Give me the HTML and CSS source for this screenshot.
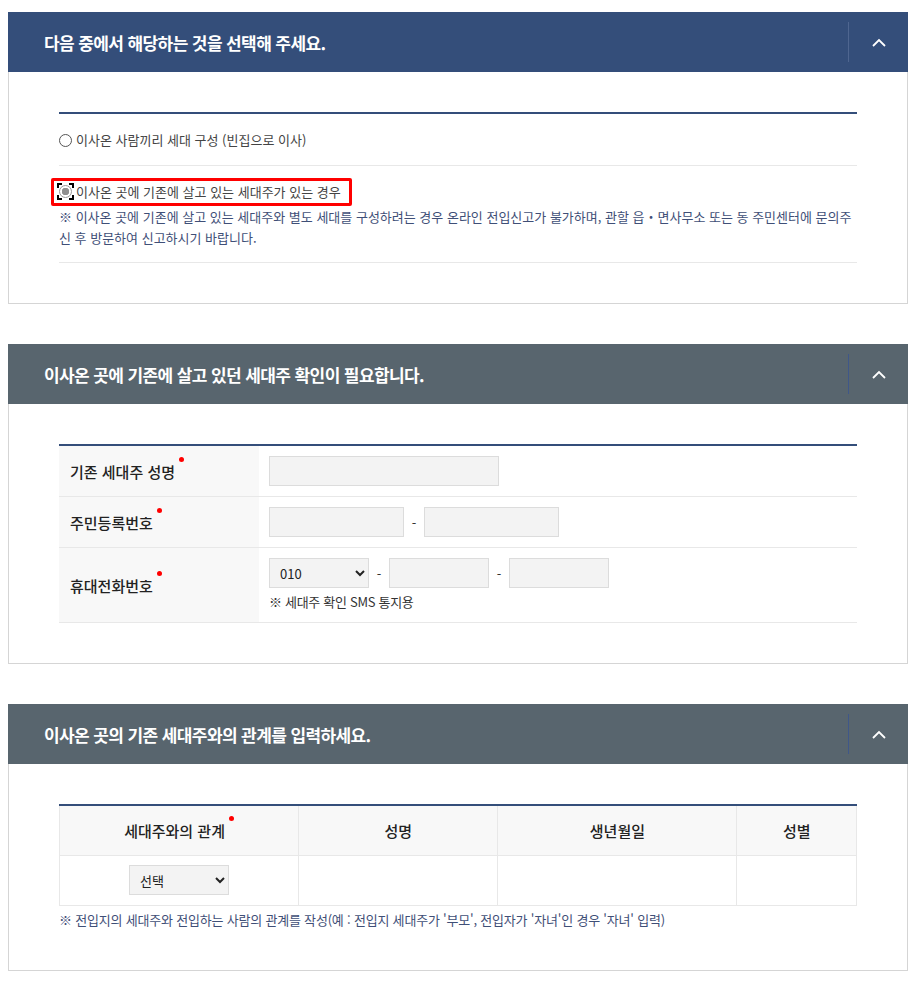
FILE: index.html
```html
<!DOCTYPE html>
<html lang="ko">
<head>
    <meta charset="UTF-8">
    <meta name="viewport" content="width=device-width, initial-scale=1.0">
    <title>전입신고 – 세대주 확인</title>
    <link rel="stylesheet" href="styles.css">
</head>
<body>
<div class="page">

    <!-- 1. 이사 유형 선택 -->
    <section class="panel">
        <div class="panel-head head-blue">
            <h2>다음 중에서 해당하는 것을 선택해 주세요.</h2>
            <button class="toggle" type="button" aria-label="접기">
                <svg width="14" height="9" viewBox="0 0 14 9"><path d="M1 8 7 2l6 6" fill="none" stroke="#fff" stroke-width="1.8"/></svg>
            </button>
        </div>
        <div class="panel-body">
            <ul class="choice-list">
                <li class="choice">
                    <label class="choice-label">
                        <span class="radio-wrap"><input class="radio" type="radio" name="moveType"></span>이사온 사람끼리 세대 구성 (빈집으로 이사)
                    </label>
                </li>
                <li class="choice">
                    <label class="choice-label is-focused">
                        <span class="radio-wrap focus-ring"><input class="radio" type="radio" name="moveType" checked></span>이사온 곳에 기존에 살고 있는 세대주가 있는 경우
                    </label>
                    <p class="note">※ 이사온 곳에 기존에 살고 있는 세대주와 별도 세대를 구성하려는 경우 온라인 전입신고가 불가하며, 관할 읍・면사무소 또는 동 주민센터에 문의주신 후 방문하여 신고하시기 바랍니다.</p>
                </li>
            </ul>
        </div>
    </section>

    <!-- 2. 기존 세대주 확인 -->
    <section class="panel">
        <div class="panel-head head-gray">
            <h2>이사온 곳에 기존에 살고 있던 세대주 확인이 필요합니다.</h2>
            <button class="toggle" type="button" aria-label="접기">
                <svg width="14" height="9" viewBox="0 0 14 9"><path d="M1 8 7 2l6 6" fill="none" stroke="#fff" stroke-width="1.8"/></svg>
            </button>
        </div>
        <div class="panel-body">
            <table class="form-table">
                <tr>
                    <th><span class="req">기존 세대주 성명</span></th>
                    <td><input class="inp w230" type="text"></td>
                </tr>
                <tr>
                    <th><span class="req">주민등록번호</span></th>
                    <td>
                        <div class="field-row">
                            <input class="inp w135" type="text">
                            <span class="dash">-</span>
                            <input class="inp w135" type="password">
                        </div>
                    </td>
                </tr>
                <tr>
                    <th><span class="req">휴대전화번호</span></th>
                    <td>
                        <div class="field-row">
                            <select class="sel w100">
                                <option>010</option>
                                <option>011</option>
                                <option>016</option>
                                <option>017</option>
                                <option>019</option>
                            </select>
                            <span class="dash">-</span>
                            <input class="inp w100" type="text">
                            <span class="dash">-</span>
                            <input class="inp w100" type="text">
                        </div>
                        <p class="sub-note">※ 세대주 확인 SMS 통지용</p>
                    </td>
                </tr>
            </table>
        </div>
    </section>

    <!-- 3. 세대주와의 관계 -->
    <section class="panel">
        <div class="panel-head head-gray">
            <h2>이사온 곳의 기존 세대주와의 관계를 입력하세요.</h2>
            <button class="toggle" type="button" aria-label="접기">
                <svg width="14" height="9" viewBox="0 0 14 9"><path d="M1 8 7 2l6 6" fill="none" stroke="#fff" stroke-width="1.8"/></svg>
            </button>
        </div>
        <div class="panel-body">
            <table class="list-table">
                <colgroup>
                    <col class="c30">
                    <col class="c25">
                    <col class="c30">
                    <col class="c15">
                </colgroup>
                <tr>
                    <th><span class="req">세대주와의 관계</span></th>
                    <th>성명</th>
                    <th>생년월일</th>
                    <th>성별</th>
                </tr>
                <tr>
                    <td>
                        <select class="sel w100">
                            <option>선택</option>
                            <option>부모</option>
                            <option>자녀</option>
                            <option>배우자</option>
                        </select>
                    </td>
                    <td></td>
                    <td></td>
                    <td></td>
                </tr>
            </table>
            <p class="note">※ 전입지의 세대주와 전입하는 사람의 관계를 작성(예 : 전입지 세대주가 '부모', 전입자가 '자녀'인 경우 '자녀' 입력)</p>
        </div>
    </section>

</div>
</body>
</html>
```

FILE: styles.css
```css
* {
    box-sizing: border-box;
}
body {
    margin: 0;
    background: #fff;
    font-family: "Noto Sans CJK KR", "Noto Sans", sans-serif;
    font-size: 13px;
    color: #333;
}
.page {
    width: 900px;
    margin-left: 8px;
    padding-top: 12px;
}

/* 패널 */
.panel {
    margin-bottom: 40px;
}
.panel-head {
    height: 60px;
    display: flex;
    align-items: center;
    padding-left: 36px;
}
.head-blue {
    background-color: #344e7a;
}
.head-gray {
    background-color: #58656e;
}
.panel-head h2 {
    flex: 1;
    margin: 0;
    color: #fff;
    font-size: 17px;
    font-weight: 700;
    letter-spacing: -0.6px;
}
.toggle {
    width: 60px;
    height: 40px;
    padding: 0;
    background: none;
    border: 0;
    border-left: 1px solid #4f6690;
    display: flex;
    justify-content: center;
    align-items: center;
    cursor: pointer;
}
.head-gray .toggle {
    border-left-color: #3f5789;
}
.panel-body {
    border: 1px solid #d5d5d5;
    border-top: 0;
    padding: 40px 50px;
}

/* 선택 목록 */
.choice-list {
    list-style: none;
    margin: 0;
    padding: 0;
    border-top: 2px solid #344e7a;
}
.choice {
    padding: 16px 0 14px;
    border-bottom: 1px solid #e8e8e8;
}
.choice-label {
    position: relative;
    display: inline-flex;
    align-items: center;
    line-height: 20px;
    color: #444;
    cursor: pointer;
}
/* 키보드 포커스 표시(빨간 박스) */
.is-focused::before {
    content: "";
    position: absolute;
    top: -4px;
    bottom: -4px;
    left: -8px;
    right: -11px;
    border: 3px solid #f00;
    border-radius: 2px;
}
.radio-wrap {
    display: inline-flex;
    width: 17px;
    height: 17px;
    margin-left: -2px;
    margin-right: 2px;
    justify-content: center;
    align-items: center;
}
.focus-ring {
    background:
        linear-gradient(#000, #000) left top / 5px 2px no-repeat,
        linear-gradient(#000, #000) left top / 2px 5px no-repeat,
        linear-gradient(#000, #000) right top / 5px 2px no-repeat,
        linear-gradient(#000, #000) right top / 2px 5px no-repeat,
        linear-gradient(#000, #000) left bottom / 5px 2px no-repeat,
        linear-gradient(#000, #000) left bottom / 2px 5px no-repeat,
        linear-gradient(#000, #000) right bottom / 5px 2px no-repeat,
        linear-gradient(#000, #000) right bottom / 2px 5px no-repeat;
}
.radio {
    appearance: none;
    width: 13px;
    height: 13px;
    margin: 0;
    border: 1px solid #555;
    border-radius: 50%;
    background: #fff;
}
.radio:checked {
    border-color: #9a9a9a;
    background: radial-gradient(circle, #8f8f8f 0 3.5px, #fff 4px);
}
.note {
    margin: 4px 0 0;
    line-height: 21px;
    color: #3f4f77;
}

/* 입력 표 */
.form-table {
    width: 100%;
    border-collapse: collapse;
    border-top: 2px solid #344e7a;
}
.form-table th {
    width: 200px;
    padding: 0 11px;
    background: #f8f8f8;
    text-align: left;
    font-size: 15px;
    font-weight: 500;
    color: #222;
    border-bottom: 1px solid #e8e8e8;
}
.form-table td {
    padding: 10px;
    border-bottom: 1px solid #e8e8e8;
}
.req::after {
    content: "";
    display: inline-block;
    width: 5px;
    height: 5px;
    margin-left: 4px;
    border-radius: 50%;
    background: #f00;
    vertical-align: top;
    position: relative;
    top: -4px;
}
.field-row {
    display: flex;
    align-items: center;
}
.dash {
    width: 20px;
    text-align: center;
    color: #333;
}
.inp, .sel {
    height: 30px;
    border: 1px solid #dcdcdc;
    background-color: #f3f3f3;
    font-family: inherit;
    font-size: 13px;
    color: #222;
}
.sel {
    padding: 0 4px 0 6px;
}
.w230 { width: 230px; }
.w135 { width: 135px; }
.w100 { width: 100px; }
.sub-note {
    margin: 4px 0 0;
    line-height: 20px;
    color: #333;
    letter-spacing: -0.3px;
}

/* 관계 표 */
.list-table {
    width: 100%;
    border-collapse: collapse;
    border-top: 2px solid #344e7a;
    border-left: 1px solid #e8e8e8;
    border-right: 1px solid #e8e8e8;
}
.c30 { width: 30%; }
.c25 { width: 25%; }
.c15 { width: 15%; }
.list-table th,
.list-table td {
    height: 50px;
    text-align: center;
    border-right: 1px solid #e8e8e8;
    border-bottom: 1px solid #e8e8e8;
}
.list-table th {
    background: #f8f8f8;
    font-size: 15px;
    font-weight: 500;
    color: #222;
}
.list-table + .note {
    margin-top: 4px;
    line-height: 20px;
    letter-spacing: -0.2px;
}
```
